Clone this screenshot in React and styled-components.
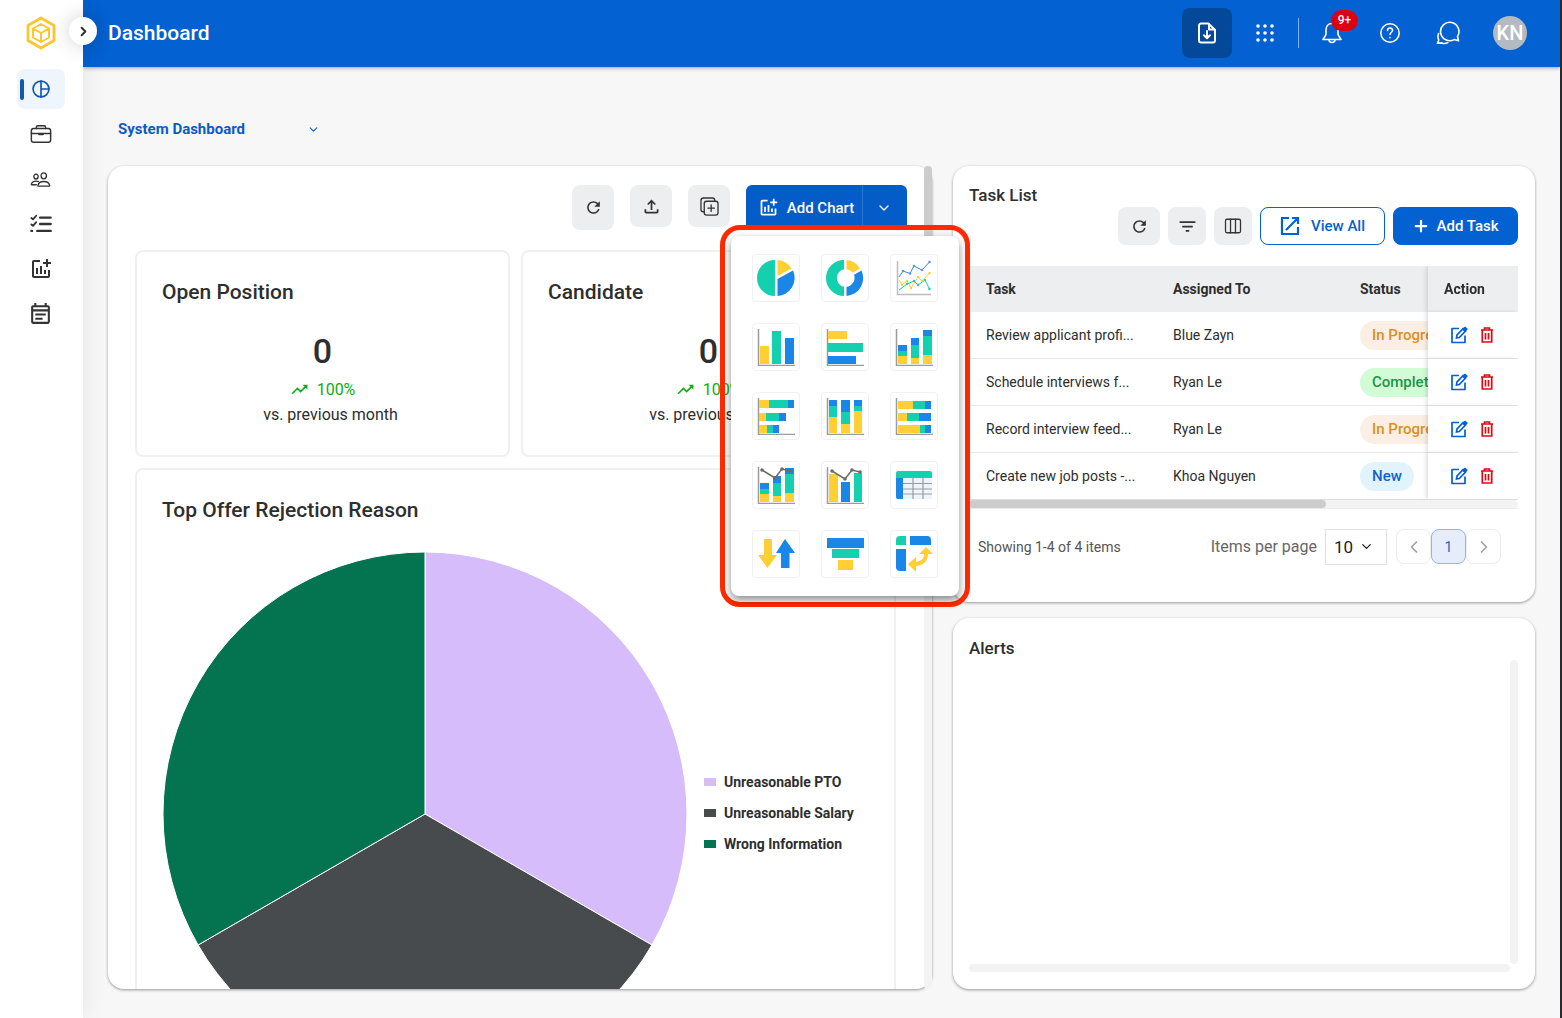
import React from 'react';
import styled, { createGlobalStyle } from 'styled-components';
import { MdFilterList, MdOutlineAddchart, MdOutlineEventNote, MdOutlineFileUpload, MdRefresh, MdTrendingUp } from 'react-icons/md';
import { IoDuplicateOutline, IoPeopleOutline } from 'react-icons/io5';
import { ChevronDown, ChevronLeft, ChevronRight, Plus } from 'lucide-react';

const BLUE = '#0461d2';
const G = '#14d0ae';
const Y = '#ffcf33';
const B = '#1a86e8';
const AXIS = '#9b9b9b';

const GlobalStyle = createGlobalStyle`
    * {
        box-sizing: border-box;
    }
    body {
        margin: 0;
        background: #f7f7f7;
        color: #2e2e2e;
        font-family: Roboto, 'Liberation Sans', sans-serif;
        font-size: 14px;
    }
    button, select {
        font-family: inherit;
        color: inherit;
    }
    button {
        padding: 0;
        border: none;
        background: none;
        cursor: pointer;
    }
    svg {
        display: block;
        flex: none;
    }
`;

const Shell = styled.div`
    display: flex;
    height: 100vh;
    overflow: hidden;
    border-right: 2px solid #2a2a2c;
`;

/* sidebar */
const Sidebar = styled.aside`
    position: relative;
    z-index: 3;
    flex: none;
    width: 83px;
    padding: 16px 2px 0 0;
    background: #ffffff;
    box-shadow: 0 0 24px rgba(0, 0, 0, 0.08);
    display: flex;
    flex-direction: column;
    align-items: center;
    gap: 19px;
`;
const Toggle = styled.button`
    position: absolute;
    top: 17px;
    right: -14px;
    width: 28px;
    height: 28px;
    border-radius: 50%;
    background: #ffffff;
    box-shadow: 0 0 20px rgba(0, 0, 0, 0.2);
    display: grid;
    place-items: center;
`;
const Nav = styled.nav`
    display: flex;
    flex-direction: column;
    gap: 5px;
`;
const NavLink = styled.a`
    width: 48px;
    height: 40px;
    padding: 0 7px 0 3px;
    border-radius: 8px;
    color: ${(p) => (p.$active ? '#1259ae' : '#333333')};
    background: ${(p) => (p.$active ? '#eef5fd' : 'none')};
    display: flex;
    align-items: center;

    &::before {
        content: '';
        width: 4px;
        height: 21px;
        border-radius: 2px;
        background: ${(p) => (p.$active ? '#1259ae' : 'none')};
    }
    svg {
        margin: 0 auto;
    }
`;

/* header */
const Page = styled.div`
    flex: 1;
    min-width: 0;
    display: flex;
    flex-direction: column;
`;
const Header = styled.header`
    position: relative;
    z-index: 2;
    flex: none;
    height: 67px;
    padding: 0 25px 2px;
    background: ${BLUE};
    color: #ffffff;
    box-shadow: 0 1px 4px rgba(0, 0, 0, 0.35);
    display: flex;
    align-items: center;
    justify-content: space-between;
`;
const PageTitle = styled.h1`
    margin: 0;
    font-size: 21px;
    font-weight: 500;
    line-height: 28px;
`;
const Tools = styled.div`
    display: flex;
    align-items: center;
    gap: 12px;
`;
const Account = styled.div`
    display: flex;
    align-items: center;
    gap: 16px;
`;
const HeaderButton = styled.button`
    position: relative;
    width: ${(p) => (p.$wide ? 50 : 42)}px;
    height: 50px;
    border-radius: 8px;
    background: ${(p) => (p.$filled ? '#034899' : 'none')};
    display: grid;
    place-items: center;
`;
const Divider = styled.span`
    width: 1px;
    height: 30px;
    background: rgba(255, 255, 255, 0.5);
`;
const Badge = styled.span`
    position: absolute;
    top: 2px;
    left: 20px;
    width: 27px;
    height: 21px;
    border-radius: 11px;
    background: #dc0014;
    font-size: 12px;
    font-weight: 500;
    line-height: 21px;
`;
const Avatar = styled.span`
    width: 34px;
    height: 34px;
    border-radius: 50%;
    background: #b4bac2;
    color: #ffffff;
    font-size: 20px;
    font-weight: 500;
    line-height: 34px;
`;

/* content */
const Content = styled.main`
    flex: 1;
    min-height: 0;
    padding: 42px 25px 29px;
    display: flex;
    flex-direction: column;
    gap: 17px;
`;
const DashboardPicker = styled.label`
    flex: none;
    width: 214px;
    height: 40px;
    padding: 0 2px 0 10px;
    color: #0d5bc4;
    display: flex;
    align-items: center;

    select {
        flex: 1;
        appearance: none;
        border: none;
        outline: none;
        padding: 0;
        background: none;
        font-size: 15px;
        font-weight: 700;
    }
`;
const Board = styled.div`
    flex: 1;
    min-height: 0;
    display: grid;
    grid-template-columns: minmax(0, 824fr) minmax(0, 582fr);
    grid-template-rows: minmax(0, 1fr);
    gap: 21px;
`;
const Panel = styled.section`
    border-radius: 16px;
    background: #ffffff;
    box-shadow: 0 1px 3px rgba(0, 0, 0, 0.4);
`;
const ChartsPanel = styled(Panel)`
    display: grid;
    grid-template-columns: minmax(0, 1fr) 8px;
    grid-template-rows: auto minmax(0, 1fr);
`;
const ChartsToolbar = styled.div`
    padding: 19px 17px 20px;
    display: flex;
    align-items: flex-start;
    justify-content: flex-end;
    gap: 16px;
`;
const ChartsBody = styled.div`
    overflow: hidden;
    border-radius: 0 0 0 16px;
    padding: 0 28px 0 27px;
    display: grid;
    grid-template-columns: 1fr 1fr;
    grid-template-rows: 207px auto;
    align-content: start;
    gap: 11px;
`;
const PanelScroll = styled.div`
    grid-column: 2;
    grid-row: 1 / 3;
    border-radius: 4px;
    background: #f3f3f3;

    &::before {
        content: '';
        display: block;
        height: 50%;
        border-radius: 4px;
        background: #cccccc;
    }
`;
const GreyButton = styled.button`
    width: ${(p) => p.$w || 42}px;
    height: ${(p) => p.$h || 42}px;
    border-radius: 8px;
    background: #edeef0;
    color: #333333;
    display: grid;
    place-items: center;
`;
const SplitButton = styled.div`
    position: relative;
    height: 45px;
    border-radius: 6px;
    background: #045cc8;
    color: #ffffff;
    display: flex;
`;
const SplitMain = styled.button`
    width: 116px;
    padding-left: 4px;
    font-size: 15px;
    font-weight: 500;
    display: flex;
    align-items: center;
    justify-content: center;
    gap: 8px;
`;
const SplitArrow = styled.button`
    width: 45px;
    padding-right: 3px;
    border-left: 1px solid #2f76d0;
    display: grid;
    place-items: center;
`;

/* chart type menu */
const Highlight = styled.div`
    position: absolute;
    z-index: 5;
    top: 40px;
    right: -63px;
    padding: 6px;
    border: 5px solid #ff2a00;
    border-radius: 20px;
`;
const ChartMenu = styled.div`
    padding: 18px 21px;
    border-radius: 8px;
    background: #ffffff;
    box-shadow: 0 4px 8px rgba(0, 0, 0, 0.45);
    display: grid;
    grid-template-columns: repeat(3, 48px);
    grid-auto-rows: 48px;
    gap: 21px;
`;
const ChartTile = styled.button`
    border: 1px solid #f1f1f1;
    border-radius: 4px;
    display: grid;
    place-items: center;
`;

/* widgets */
const Widget = styled.article`
    grid-column: ${(p) => (p.$full ? '1 / 3' : 'auto')};
    border: 2px solid #f0f0f0;
    border-radius: 8px;
    padding: 26px 25px;
`;
const WidgetTitle = styled.h2`
    margin: 0;
    font-size: 21px;
    font-weight: 500;
    line-height: 28px;
`;
const Metric = styled.div`
    margin-top: 23px;
    text-align: center;
`;
const MetricValue = styled.div`
    font-size: 34px;
    font-weight: 500;
    line-height: 44px;
`;
const Trend = styled.div`
    height: 32px;
    color: #0aae12;
    font-size: 16px;
    display: flex;
    align-items: center;
    justify-content: center;
    gap: 8px;
`;
const Compare = styled.div`
    padding-left: 16px;
    font-size: 16px;
    line-height: 20px;
`;
const PieRow = styled.div`
    margin-top: 28px;
    padding-left: 1px;
    display: flex;
    align-items: center;
    gap: 17px;
`;
const Legend = styled.ul`
    margin: 0;
    padding: 0 0 2px;
    list-style: none;
    font-size: 14px;
    font-weight: 700;
    line-height: 31px;
`;
const LegendItem = styled.li`
    display: flex;
    align-items: center;
    gap: 8px;

    &::before {
        content: '';
        width: 12px;
        height: 8px;
        background: ${(p) => p.$color};
    }
`;

/* right column */
const Side = styled.div`
    min-height: 0;
    display: flex;
    flex-direction: column;
    gap: 16px;
`;
const TaskPanel = styled(Panel)`
    flex: none;
    padding: 17px 17px 18px 16px;
`;
const AlertsPanel = styled(Panel)`
    flex: 1;
    min-height: 120px;
    padding: 18px 17px 17px 16px;
    display: flex;
    flex-direction: column;
`;
const PanelTitle = styled.h2`
    margin: 0;
    font-size: 17px;
    font-weight: 500;
    line-height: 24px;
`;
const TaskTools = styled.div`
    padding-bottom: 21px;
    display: flex;
    justify-content: flex-end;
    gap: 8px;
`;
const TaskButton = styled.button`
    width: 125px;
    height: 38px;
    border: 1px solid ${BLUE};
    border-radius: 8px;
    background: ${(p) => (p.$primary ? BLUE : '#ffffff')};
    color: ${(p) => (p.$primary ? '#ffffff' : BLUE)};
    font-size: 15px;
    font-weight: 500;
    display: flex;
    align-items: center;
    justify-content: center;
    gap: ${(p) => (p.$primary ? 6 : 11)}px;
`;
const TableWrap = styled.div`
    overflow: hidden;
    border-bottom: 1px solid #dcdde0;
`;
const Table = styled.table`
    width: 100%;
    min-width: 651px;
    table-layout: fixed;
    border-spacing: 0;
    text-align: left;

    th, td {
        height: 47px;
        padding: 0 0 0 17px;
        background: #ffffff;
        border-bottom: 1px solid #e6e8ec;
        white-space: nowrap;
    }
    th {
        height: 46px;
        background: #edeef0;
        border-color: #edeef0;
        font-weight: 700;
    }
    tr > :last-child {
        position: sticky;
        right: 0;
        width: 90px;
        padding-left: 16px;
        box-shadow: -2px 0 4px rgba(0, 0, 0, 0.12);
    }
    tbody tr:last-child td {
        border-bottom: none;
        height: 46px;
    }
`;
const tones = {
    progress: ['#fbefe5', '#dc8f1c'],
    done: ['#d2fcd6', '#209447'],
    fresh: ['#e1f4fe', '#1262ce'],
};
const Pill = styled.span`
    display: inline-block;
    padding: 0 12px;
    border-radius: 15px;
    background: ${(p) => tones[p.$tone][0]};
    color: ${(p) => tones[p.$tone][1]};
    font-size: 15px;
    font-weight: 500;
    line-height: 29px;
`;
const Actions = styled.div`
    padding-left: 6px;
    display: flex;
    align-items: center;
    gap: 12px;
`;
const ActionButton = styled.button`
    color: ${(p) => (p.$danger ? '#dc0a14' : BLUE)};
`;
const Bar = styled.div`
    height: 8px;
    border-radius: 4px;
    background: #f3f3f3;
`;
const Thumb = styled.div`
    width: 65%;
    height: 8px;
    border-radius: 4px;
    background: #cccccc;
`;
const Pager = styled.div`
    height: 76px;
    padding: 0 17px 0 9px;
    border-top: 1px solid #ececec;
    color: #555555;
    display: flex;
    align-items: center;
`;
const PerPage = styled.label`
    margin: 0 9px 0 auto;
    font-size: 16px;
    color: #666666;
    display: flex;
    align-items: center;
    gap: 8px;
`;
const SizeBox = styled.span`
    width: 62px;
    height: 36px;
    padding: 0 12px 0 8px;
    border: 1px solid #e0e0e0;
    color: #222222;
    display: flex;
    align-items: center;

    select {
        width: 25px;
        appearance: none;
        border: none;
        outline: none;
        padding: 0;
        background: none;
        font-size: 17px;
    }
`;
const PageButton = styled.button`
    width: 35px;
    height: 35px;
    border: 1px solid ${(p) => (p.$current ? '#8fb6ea' : '#ececec')};
    border-radius: 8px;
    background: ${(p) => (p.$current ? '#e6edfa' : '#ffffff')};
    color: ${(p) => (p.$current ? '#1c66cc' : '#a0a0a0')};
    font-size: 14px;
    display: grid;
    place-items: center;
`;
const AlertsBody = styled.div`
    flex: 1;
    display: grid;
    grid-template-columns: 1fr 8px;
    grid-template-rows: 1fr 8px;
`;
const AlertsScrollY = styled.div`
    grid-column: 2;
    border-radius: 4px;
    background: #f3f3f3;
`;

/* line icons */
const Line = ({ size = 22, w = 2, children }) => (
    <svg width={size} height={size} viewBox="0 0 24 24" fill="none" stroke="currentColor" strokeWidth={w} strokeLinecap="round" strokeLinejoin="round">
        {children}
    </svg>
);

const Logo = () => (
    <svg width="32" height="34" viewBox="0 0 32 34" fill="none" stroke="#fdc62f" strokeLinejoin="round">
        <path strokeWidth="2.8" d="M16 2l13 7.5v15L16 32 3 24.500V9.500z" />
        <path strokeWidth="2" d="M16 8l8 4.500v9L16 26l-8-4.500v-9zM8 12.500l8 4.500 8-4.500M16 17v9" />
    </svg>
);
const PieIcon = () => (
    <Line size={20}>
        <circle cx="12" cy="12" r="9.500" />
        <path d="M12 2.500v19M12 12h9.500" />
    </Line>
);
const BriefcaseIcon = () => (
    <Line w={1.6}>
        <rect x="1.500" y="6" width="21" height="15" rx="2.500" />
        <path d="M7 6V4.500A1.500 1.500 0 0 1 8.500 3h7A1.500 1.500 0 0 1 17 4.500V6M1.500 11.500h21" />
        <path strokeWidth="2.400" d="M10 12.200h4" />
    </Line>
);
const ChecklistIcon = () => (
    <Line w={2.6}>
        <path d="M11 5h11.500M11 12h11.500M8 19.500h14.500M1.600 19.500h.6" />
        <path strokeWidth="2" d="M1.500 5.500L3.300 7l3.500-4M1.500 12.500L3.300 14l3.500-4" />
    </Line>
);
const FileDownIcon = () => (
    <Line size={24}>
        <path d="M13.500 2.500H6a2 2 0 0 0-2 2v15a2 2 0 0 0 2 2h12a2 2 0 0 0 2-2V9l-6.500-6.500z" />
        <path d="M14 3v5.500h5.500" />
        <path d="M12 10v7M9 14.300l3 3 3-3" />
    </Line>
);
const DotsIcon = () => (
    <svg width="18" height="18" viewBox="0 0 18 18" fill="currentColor">
        {[2, 9, 16].map((y) => [2, 9, 16].map((x) => <circle key={`${x}-${y}`} cx={x} cy={y} r="1.800" />))}
    </svg>
);
const BellIcon = () => (
    <Line size={24} w={1.6}>
        <path d="M12 2.500c-4 0-6 3-6 6.500v4c0 1.500-2.500 4-3 5.500h18c-.5-1.500-3-4-3-5.500V9c0-3.500-2-6.500-6-6.500zM9 18.500c0 4 6 4 6 0" />
    </Line>
);
const HelpIcon = () => (
    <Line size={22} w={1.7}>
        <circle cx="12" cy="12" r="10" />
        <path d="M9.300 9.300c0-3.600 5.500-3.500 5.500-.2 0 2-2.800 2.200-2.800 4.600M12 16.900v.2" />
    </Line>
);
const ChatIcon = () => (
    <Line size={24} w={1.6}>
        <path d="M21.500 15.500l1 4.300-4.300-1.200A9.200 9.200 0 1 1 21.500 15.500z" />
        <path d="M2.600 12.500c-.9 2.400-.8 4.600.2 6.500L1.500 22.300l4.300-.4c2.200.9 4.200.7 6-.3" />
    </Line>
);
const ColumnsIcon = () => (
    <Line size={18} w={1.7}>
        <rect x="2" y="3" width="20" height="18" rx="2" />
        <path d="M8.700 3v18M15.300 3v18" />
    </Line>
);
const OpenIcon = () => (
    <svg width="20" height="20" viewBox="0 0 20 20" fill="none" stroke="currentColor" strokeWidth="2.200">
        <path d="M9 2H2v16h16v-7M12 2h6v6M18 2L6 14" />
    </svg>
);
const EditIcon = () => (
    <svg width="18" height="18" viewBox="0 0 18 18" fill="none" stroke="currentColor" strokeWidth="1.700">
        <path d="M9 2.500H2v14h13V9.500" strokeLinejoin="round" />
        <path d="M6.500 12l.5-3 6-6.300 2.500 2.400L9.300 11.500z" />
        <path fill="currentColor" d="M13 3.200L15 1.500 16.700 3 15 5z" />
    </svg>
);
const TrashIcon = () => (
    <svg width="14" height="16" viewBox="0 0 14 16" fill="none" stroke="currentColor" strokeWidth="1.700">
        <path d="M1 3h12M4.500 2.500V1h5v1.500M2.300 3v12h9.400V3M5.500 6v6.500M8.500 6v6.500" />
    </svg>
);

/* chart thumbnails, 38 x 38 */
const Axes = () => <path d="M1.500 1v36.500H38" stroke={AXIS} strokeWidth="1.500" fill="none" />;
const Rects = ({ data }) => data.map(([x, y, w, h, c]) => <rect key={`${x}-${y}`} x={x} y={y} width={w} height={h} fill={c} />);

const STACKED = [
    [3, 17, 9, 6, B], [3, 23, 9, 5, G], [3, 28, 9, 8, Y],
    [16, 10, 8, 7, B], [16, 17, 8, 13, G], [16, 30, 8, 6, Y],
    [28, 2, 9, 6, B], [28, 8, 9, 19, G], [28, 27, 9, 9, Y],
];
const CHART_TYPES = [
    ['Pie chart', (
        <>
            <path d="M18 1v36a18 18 0 0 1 0-36z" fill={G} />
            <path d="M20.500 17V1a18 18 0 0 1 14 8.500z" fill={Y} />
            <path d="M20.500 37V20l15.500-8.500A18 18 0 0 1 20.500 37z" fill={B} />
        </>
    )],
    ['Donut chart', (
        <>
            <path d="M18 1v9.200a9 9 0 0 0 0 17.600V37a18 18 0 0 1 0-36z" fill={G} />
            <path d="M20.500 1a18 18 0 0 1 13.500 8.500l-7.500 4a9 9 0 0 0-6-3.300z" fill={Y} />
            <path d="M20.500 37v-9.200A9 9 0 0 0 28 15.700l7.500-4.200A18 18 0 0 1 20.500 37z" fill={B} />
        </>
    )],
    ['Line chart', (
        <>
            <path d="M2.500 2v33.500H36" stroke="#bdbdbd" strokeWidth="1.500" fill="none" />
            <g fill="none" strokeWidth="1">
                <path d="M4 18L8 12 15 14.500 19 7 27 11 34.500 3" stroke="#3d83e0" />
                <path d="M4 21L7 26 12 22 16 29 23 18 27 22 34.500 14" stroke={Y} />
                <path d="M4 31L12 25 19 22 23 26 30 21 34.500 30" stroke={G} />
            </g>
            {[[8, 12], [15, 14.5], [19, 7], [27, 11], [34.5, 3]].map(([x, y]) => <circle key={x} cx={x} cy={y} r="1.300" fill="#5b98e8" />)}
            {[[7, 26], [12, 22], [16, 29], [23, 18], [27, 22], [34.5, 14]].map(([x, y]) => <circle key={x} cx={x} cy={y} r="1.200" fill={Y} />)}
            {[[12, 25], [19, 22], [23, 26], [30, 21], [34.5, 30]].map(([x, y]) => <circle key={x} cx={x} cy={y} r="1.200" fill={G} />)}
        </>
    )],
    ['Column chart', <><Axes /><Rects data={[[3, 18, 9, 18, Y], [15, 3, 9, 33, G], [28, 10, 9, 26, B]]} /></>],
    ['Bar chart', <><Axes /><Rects data={[[2, 3, 19, 8, Y], [2, 15, 35, 9, G], [2, 28, 28, 8, B]]} /></>],
    ['Stacked column chart', <><Axes /><Rects data={STACKED} /></>],
    ['Stacked bar chart', (
        <>
            <Axes />
            <Rects
                data={[
                    [2, 3, 10, 8, Y], [12, 3, 19, 8, G], [31, 3, 6, 8, B],
                    [2, 16, 7, 8, Y], [9, 16, 13, 8, G], [22, 16, 7, 8, B],
                    [2, 28, 8, 8, Y], [10, 28, 6, 8, G], [16, 28, 6, 8, B],
                ]}
            />
        </>
    )],
    ['100% stacked column chart', (
        <>
            <Axes />
            <Rects
                data={[
                    [3, 3, 8, 6, B], [3, 9, 8, 11, G], [3, 20, 8, 16, Y],
                    [15, 3, 9, 12, B], [15, 15, 9, 12, G], [15, 27, 9, 9, Y],
                    [28, 3, 8, 6, B], [28, 9, 8, 5, G], [28, 14, 8, 22, Y],
                ]}
            />
        </>
    )],
    ['100% stacked bar chart', (
        <>
            <Axes />
            <Rects
                data={[
                    [3, 4, 15, 8, Y], [18, 4, 12, 8, G], [30, 4, 6, 8, B],
                    [3, 16, 9, 8, Y], [12, 16, 12, 8, G], [24, 16, 12, 8, B],
                    [3, 28, 22, 8, Y], [25, 28, 5, 8, G], [30, 28, 6, 8, B],
                ]}
            />
        </>
    )],
    ['Stacked combo chart', (
        <>
            <Axes />
            <Rects data={STACKED} />
            <path d="M5 4l13 8 7-9 8 2" stroke="#6b6b6b" strokeWidth="1.500" fill="none" />
            {[[5, 4], [18, 12], [25, 3], [33, 5]].map(([x, y]) => <circle key={x} cx={x} cy={y} r="1.800" fill="#6b6b6b" />)}
        </>
    )],
    ['Combo chart', (
        <>
            <Axes />
            <Rects data={[[3, 8, 9, 28, Y], [15, 16, 9, 20, B], [28, 7, 8, 29, G]]} />
            <path d="M6 5l13 8 7-9 8 2" stroke="#6b6b6b" strokeWidth="1.500" fill="none" />
            {[[6, 5], [19, 13], [26, 4], [34, 6]].map(([x, y]) => <circle key={x} cx={x} cy={y} r="1.800" fill="#6b6b6b" />)}
        </>
    )],
    ['Table', (
        <>
            <rect x="8" y="12" width="29" height="21" fill="#eef4fe" />
            <path d="M1 12V7a2 2 0 0 1 2-2h32a2 2 0 0 1 2 2v5z" fill={G} />
            <path d="M1 12h7v21H3a2 2 0 0 1-2-2z" fill={B} />
            <path d="M8 17.500h29M8 23h29M8 28h29M18 12v21M28 12v21" stroke={AXIS} strokeWidth="1.200" />
        </>
    )],
    ['Increase and decrease', (
        <>
            <path d="M7 4h8v16h5L10.500 33 1 20h6z" fill={Y} />
            <path d="M24 33V18h-5L28 4l10 14h-5.500v15z" fill={B} />
        </>
    )],
    ['Funnel chart', <Rects data={[[1, 3, 37, 10, B], [6, 14, 27, 9, G], [12, 25, 15, 10, Y]]} />],
    ['Pivot table', (
        <>
            <path d="M1 10V5a4 4 0 0 1 4-4h6v9z" fill={G} />
            <path d="M15 1h17a4 4 0 0 1 4 4v5H15z" fill={B} />
            <path d="M1 14h10v22H5a4 4 0 0 1-4-4z" fill={B} />
            <path d="M31 12l7 7h-5c0 7-4 11-12 12v6l-8-8 8-7v5c5-1 8-3 8-8h-5z" fill={Y} />
        </>
    )],
];

const TASKS = [
    ['Review applicant profi...', 'Blue Zayn', 'In Progress', 'progress'],
    ['Schedule interviews f...', 'Ryan Le', 'Completed', 'done'],
    ['Record interview feed...', 'Ryan Le', 'In Progress', 'progress'],
    ['Create new job posts -...', 'Khoa Nguyen', 'New', 'fresh'],
];

const NAV = [
    ['Dashboard', <PieIcon />],
    ['Jobs', <BriefcaseIcon />],
    ['Candidates', <IoPeopleOutline size={21} />],
    ['Tasks', <ChecklistIcon />],
    ['Reports', <MdOutlineAddchart size={24} />],
    ['Calendar', <MdOutlineEventNote size={25} />],
];

function MetricWidget({ title }) {
    return (
        <Widget>
            <WidgetTitle>{title}</WidgetTitle>
            <Metric>
                <MetricValue>0</MetricValue>
                <Trend>
                    <MdTrendingUp size={19} />
                    100%
                </Trend>
                <Compare>vs. previous month</Compare>
            </Metric>
        </Widget>
    );
}

function RejectionChart() {
    return (
        <Widget $full>
            <WidgetTitle>Top Offer Rejection Reason</WidgetTitle>
            <PieRow>
                <svg width="524" height="524" viewBox="-262 -262 524 524" stroke="#ffffff">
                    <path d="M0 0V-262A262 262 0 0 1 226.900 131z" fill="#d7bcfb" />
                    <path d="M0 0L226.900 131A262 262 0 0 1-226.900 131z" fill="#484b4d" />
                    <path d="M0 0L-226.900 131A262 262 0 0 1 0-262z" fill="#04734f" />
                </svg>
                <Legend>
                    <LegendItem $color="#d7bcfb">Unreasonable PTO</LegendItem>
                    <LegendItem $color="#484b4d">Unreasonable Salary</LegendItem>
                    <LegendItem $color="#04734f">Wrong Information</LegendItem>
                </Legend>
            </PieRow>
        </Widget>
    );
}

function AddChart() {
    return (
        <SplitButton>
            <SplitMain>
                <MdOutlineAddchart size={21} />
                Add Chart
            </SplitMain>
            <SplitArrow aria-label="Chart types">
                <ChevronDown size={16} />
            </SplitArrow>
            <Highlight>
                <ChartMenu>
                    {CHART_TYPES.map(([name, drawing]) => (
                        <ChartTile key={name} aria-label={name}>
                            <svg width="38" height="38" viewBox="0 0 38 38">{drawing}</svg>
                        </ChartTile>
                    ))}
                </ChartMenu>
            </Highlight>
        </SplitButton>
    );
}

function TaskList() {
    return (
        <TaskPanel>
            <PanelTitle>Task List</PanelTitle>
            <TaskTools>
                <GreyButton $h={38} aria-label="Refresh"><MdRefresh size={19} /></GreyButton>
                <GreyButton $w={38} $h={38} aria-label="Filter"><MdFilterList size={21} /></GreyButton>
                <GreyButton $w={38} $h={38} aria-label="Columns"><ColumnsIcon /></GreyButton>
                <TaskButton>
                    <OpenIcon />
                    View All
                </TaskButton>
                <TaskButton $primary>
                    <Plus size={18} strokeWidth={3} />
                    Add Task
                </TaskButton>
            </TaskTools>
            <TableWrap>
                <Table>
                    <thead>
                        <tr>
                            <th>Task</th>
                            <th>Assigned To</th>
                            <th>Status</th>
                            <th>Action</th>
                        </tr>
                    </thead>
                    <tbody>
                        {TASKS.map(([task, owner, status, tone]) => (
                            <tr key={task}>
                                <td>{task}</td>
                                <td>{owner}</td>
                                <td><Pill $tone={tone}>{status}</Pill></td>
                                <td>
                                    <Actions>
                                        <ActionButton aria-label="Edit"><EditIcon /></ActionButton>
                                        <ActionButton $danger aria-label="Delete"><TrashIcon /></ActionButton>
                                    </Actions>
                                </td>
                            </tr>
                        ))}
                    </tbody>
                </Table>
            </TableWrap>
            <Bar><Thumb /></Bar>
            <Pager>
                <span>Showing 1-4 of 4 items</span>
                <PerPage>
                    Items per page
                    <SizeBox>
                        <select defaultValue="10">
                            <option>10</option>
                        </select>
                        <ChevronDown size={15} />
                    </SizeBox>
                </PerPage>
                <PageButton aria-label="Previous page"><ChevronLeft size={20} /></PageButton>
                <PageButton $current>1</PageButton>
                <PageButton aria-label="Next page"><ChevronRight size={20} /></PageButton>
            </Pager>
        </TaskPanel>
    );
}

function App() {
    return (
        <Shell>
            <GlobalStyle />
            <Sidebar>
                <Logo />
                <Toggle aria-label="Expand menu"><ChevronRight size={15} strokeWidth={3} /></Toggle>
                <Nav>
                    {NAV.map(([name, icon], i) => (
                        <NavLink key={name} href="#" aria-label={name} $active={i === 0}>{icon}</NavLink>
                    ))}
                </Nav>
            </Sidebar>
            <Page>
                <Header>
                    <PageTitle>Dashboard</PageTitle>
                    <Tools>
                        <HeaderButton $wide $filled aria-label="Download"><FileDownIcon /></HeaderButton>
                        <HeaderButton aria-label="Apps"><DotsIcon /></HeaderButton>
                        <Divider />
                        <Account>
                            <HeaderButton aria-label="Notifications">
                                <BellIcon />
                                <Badge>9+</Badge>
                            </HeaderButton>
                            <HeaderButton aria-label="Help"><HelpIcon /></HeaderButton>
                            <HeaderButton aria-label="Chat"><ChatIcon /></HeaderButton>
                            <HeaderButton $wide><Avatar>KN</Avatar></HeaderButton>
                        </Account>
                    </Tools>
                </Header>
                <Content>
                    <DashboardPicker>
                        <select aria-label="Dashboard" defaultValue="System Dashboard">
                            <option>System Dashboard</option>
                        </select>
                        <ChevronDown size={13} />
                    </DashboardPicker>
                    <Board>
                        <ChartsPanel>
                            <ChartsToolbar>
                                <GreyButton $h={45} aria-label="Refresh"><MdRefresh size={19} /></GreyButton>
                                <GreyButton aria-label="Export"><MdOutlineFileUpload size={21} /></GreyButton>
                                <GreyButton aria-label="Duplicate"><IoDuplicateOutline size={21} /></GreyButton>
                                <AddChart />
                            </ChartsToolbar>
                            <PanelScroll />
                            <ChartsBody>
                                <MetricWidget title="Open Position" />
                                <MetricWidget title="Candidate" />
                                <RejectionChart />
                            </ChartsBody>
                        </ChartsPanel>
                        <Side>
                            <TaskList />
                            <AlertsPanel>
                                <PanelTitle>Alerts</PanelTitle>
                                <AlertsBody>
                                    <AlertsScrollY />
                                    <Bar />
                                </AlertsBody>
                            </AlertsPanel>
                        </Side>
                    </Board>
                </Content>
            </Page>
        </Shell>
    );
}

export default App;
